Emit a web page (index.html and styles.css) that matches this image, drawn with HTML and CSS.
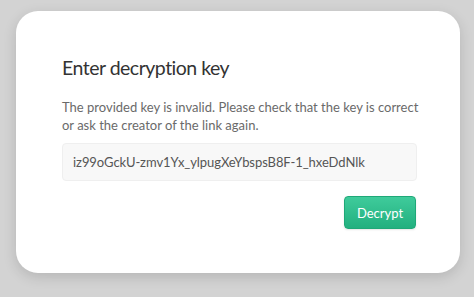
FILE: index.html
```html
<!DOCTYPE html>
<html>
<head>
<meta charset="utf-8">
<link rel="stylesheet" href="styles.css">
</head>
<body>
<div class="card">
  <h1 class="title">Enter decryption key</h1>
  <p class="message">The provided key is invalid. Please check that the key is correct or ask the creator of the link again.</p>
  <div class="key-input">iz99oGckU-zmv1Yx_ylpugXeYbspsB8F-1_hxeDdNlk</div>
  <div class="actions">
    <button class="decrypt">Decrypt</button>
  </div>
</div>
</body>
</html>
```

FILE: styles.css
```css
html, body {
  margin: 0;
  padding: 0;
}
body {
  width: 474px;
  height: 297px;
  box-sizing: border-box;
  padding: 11px 14px 0 16px;
  background: #d3d3d3;
  font-family: Lato, "Open Sans", sans-serif;
  overflow: hidden;
}
.card {
  width: 444px;
  height: 262px;
  box-sizing: border-box;
  background: #fff;
  border-radius: 22px;
  padding: 45px 43px 0 46px;
  box-shadow: 0 4px 14px rgba(0,0,0,0.14);
}
.title {
  margin: 0;
  font-size: 19.5px;
  letter-spacing: -0.5px;
  font-weight: 400;
  line-height: 24px;
  color: #333;
}
.message {
  margin: 18px -6px 0 0;
  font-size: 13px;
  line-height: 18px;
  color: #6a6a6a;
}
.key-input {
  margin-top: 9px;
  height: 38px;
  box-sizing: border-box;
  padding: 0 10px;
  border: 1px solid #efefef;
  border-radius: 4px;
  background: #f8f8f8;
  font-size: 13px;
  letter-spacing: -0.06px;
  line-height: 36px;
  color: #555;
}
.actions {
  display: flex;
  justify-content: flex-end;
  margin-top: 15px;
}
.decrypt {
  width: 72px;
  height: 33px;
  border: 1px solid #1fa878;
  border-radius: 4px;
  background: linear-gradient(#3fcb9b, #22b07f);
  color: #fff;
  font-family: Lato, "Open Sans", sans-serif;
  font-size: 13px;
  padding: 0;
  margin-right: 1px;
  box-shadow: 0 1px 2px rgba(0,0,0,0.1);
}
```
